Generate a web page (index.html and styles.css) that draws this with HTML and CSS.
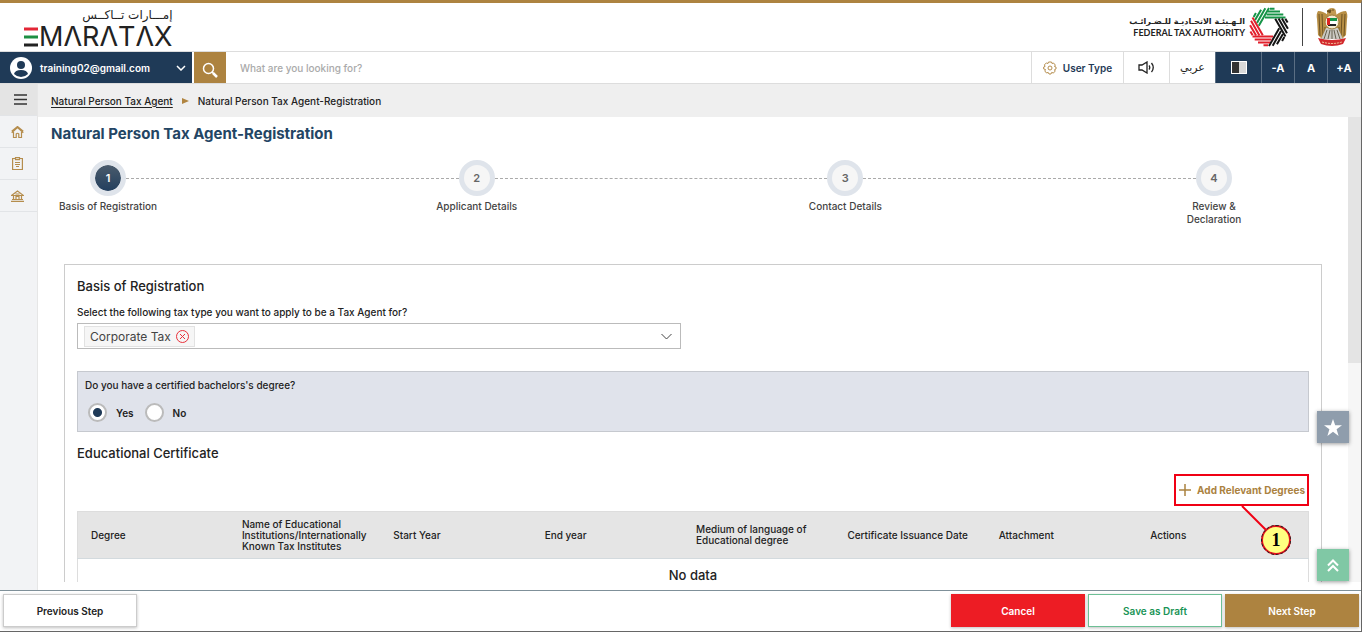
FILE: index.html
```
<!DOCTYPE html>
<html lang="en">
<head>
    <meta charset="UTF-8">
    <meta name="viewport" content="width=device-width, initial-scale=1.0">
    <title>Natural Person Tax Agent-Registration</title>
    <link rel="stylesheet" href="styles.css">
</head>
<body>
    <div class="app">
        <header class="header">
            <a class="brand" href="#" aria-label="EmaraTax">
                <span class="brand-ar" lang="ar" dir="rtl">إمـــارات تــاكــس</span>
                <span class="brand-en">
                    <svg width="14" height="20" viewBox="0 0 14 20">
                        <path d="M0 2h14" stroke="#e32636" stroke-width="3"/>
                        <path d="M0 10h14" stroke="#1d8f43" stroke-width="3"/>
                        <path d="M0 18h14" stroke="#222" stroke-width="3"/>
                    </svg>
                    <span>MΛRΛTΛX</span>
                </span>
            </a>
            <div class="authority">
                <div class="authority-name">
                    <span class="authority-ar" lang="ar" dir="rtl">الـهـيئـة الاتحـاديـة للـضـرائـب</span>
                    <span class="authority-en">FEDERAL TAX AUTHORITY</span>
                </div>
                <svg class="authority-logo" width="40" height="40" viewBox="-20 -20 40 40" fill="none" stroke-width="2">
                    <defs>
                        <path id="blade" d="M-4-9.500H16.500M-2.500-12.500H14.300M-1-15.500H11M1-18.300H5.500"/>
                    </defs>
                    <g stroke="#159447">
                        <use href="#blade" transform="rotate(-60)"/>
                        <use href="#blade"/>
                    </g>
                    <g stroke="#151515">
                        <use href="#blade" transform="rotate(60)"/>
                        <use href="#blade" transform="rotate(120)"/>
                    </g>
                    <g stroke="#e2202c">
                        <use href="#blade" transform="rotate(180)"/>
                        <use href="#blade" transform="rotate(240)"/>
                    </g>
                </svg>
                <span class="divider"></span>
                <svg class="emblem" width="32" height="40" viewBox="0 0 32 40">
                    <path d="M11 5q1-4 5-4 4 0 4 4l1 5H11z" fill="#c19a52"/>
                    <path d="M11 4l4-1-1 3zM16 3h2" fill="#6b5021" stroke="#6b5021"/>
                    <path d="M12 8Q7 4 2 4q-2 3-1 8l1 16 5 5 8-9zM20 8q5-4 10-4 2 3 1 8l-1 16-5 5-8-9z" fill="#b88f45"/>
                    <path d="M3 7l1 22M6 7l1 23M9 20v9M29 7l-1 22M26 7l-1 23M23 20v9" stroke="#6d5324" fill="none"/>
                    <path d="M10 21h12l5 11H5z" fill="#c9c8c2"/>
                    <path d="M11 23l-3 9M14 23l-2 9M16 23v9M18 23l2 9M21 23l3 9" stroke="#66614f" fill="none"/>
                    <circle cx="16" cy="15" r="7" fill="#f3ead0" stroke="#9b7a38"/>
                    <path d="M11 11h10v3H11z" fill="#159447"/>
                    <path d="M11 14h10v3H11z" fill="#fff"/>
                    <path d="M12 17h8v2h-8z" fill="#222"/>
                    <path d="M11 11h3v7h-3z" fill="#d22"/>
                    <path d="M2 31q14 4 28 0l-3 6q-11 4-22 0z" fill="#d22a2e"/>
                    <path d="M6 35q10 3 20 0" stroke="#f1c9a0" stroke-dasharray="2 1" fill="none"/>
                </svg>
            </div>
        </header>

        <div class="toolbar">
            <button class="user-menu" type="button">
                <svg width="22" height="22" viewBox="0 0 22 22">
                    <circle cx="11" cy="11" r="11" fill="#fff"/>
                    <circle cx="11" cy="8" r="4" fill="#1f3a57"/>
                    <path d="M4 17q1-4 7-4t7 4q-3 3-7 3t-7-3z" fill="#1f3a57"/>
                </svg>
                <span class="user-email">training02@gmail.com</span>
                <svg width="10" height="6" viewBox="0 0 10 6"><path d="M1 1l4 4 4-4" fill="none" stroke="#fff" stroke-width="1.500"/></svg>
            </button>
            <button class="search-btn" type="button" aria-label="Search">
                <svg width="16" height="16" viewBox="0 0 16 16" fill="none" stroke="#fff" stroke-width="1.500">
                    <circle cx="6.500" cy="6.500" r="5"/>
                    <path d="M10 10l2 2"/>
                    <path d="M11 11l4 4" stroke-width="2.500"/>
                </svg>
            </button>
            <input class="search-input" type="text" aria-label="Search" placeholder="What are you looking for?">
            <button class="tool user-type" type="button">
                <svg width="14" height="14" viewBox="0 0 14 14" fill="none" stroke="#b58d4d">
                    <path d="M5.500 1h3l.5 1.500 1.500-.5 1.800 2-.8 1.500 1.500.5v2l-1.500.7.7 1.600-2 1.700-1.500-.6-.7 1.600h-2l-.8-1.600-1.700.6-1.700-2 .7-1.500L.7 8V6l1.400-.6-.7-1.500 2-2 1.500.7z"/>
                    <circle cx="7" cy="7" r="2"/>
                </svg>
                User Type
            </button>
            <button class="tool sound" type="button" aria-label="Read aloud">
                <svg width="17" height="13" viewBox="0 0 17 13" fill="none" stroke="#222" stroke-width="1.300">
                    <path d="M1 4h3l5-3v11L4 9H1zM11 4.500q1.500 2 0 4M13.500 2q3.500 4.500 0 9"/>
                </svg>
            </button>
            <button class="tool lang" type="button" lang="ar">عربي</button>
            <button class="tool dark contrast" type="button" aria-label="Contrast">
                <svg width="16" height="13" viewBox="0 0 16 13">
                    <path d="M0 0h16v13H0z" fill="#d8d8d8"/>
                    <path d="M1 1h7v11H1z" fill="#333"/>
                    <path d="M.5.5h15v12H.5z" fill="none" stroke="#fff"/>
                </svg>
            </button>
            <button class="tool dark" type="button">-A</button>
            <button class="tool dark" type="button">A</button>
            <button class="tool dark" type="button">+A</button>
        </div>

        <div class="body">
            <nav class="sidebar">
                <button class="side-item menu" type="button" aria-label="Menu">
                    <svg width="13" height="11" viewBox="0 0 13 11"><path d="M0 1h13M0 5.500h13M0 10h13" stroke="#333" stroke-width="1.300"/></svg>
                </button>
                <a class="side-item" href="#" aria-label="Home">
                    <svg width="13" height="12" viewBox="0 0 13 12" fill="none" stroke="#b58d4d" stroke-width="1.200">
                        <path d="M.7 6.700L6.500 1.500l5.800 5.200M.7 5.200L6.500.5l5.800 4.700M2.500 6v5.500h2.700V8q1.300-1.500 2.600 0v3.500h2.700V6"/>
                    </svg>
                </a>
                <a class="side-item" href="#" aria-label="Applications">
                    <svg width="11" height="13" viewBox="0 0 11 13" fill="none" stroke="#b58d4d" stroke-width="1.200">
                        <path d="M3 1.500H.6v11h9.800v-11H8M3.500.6h4v2h-4zM3 5.500h5M3 7.500h5M4 9.500h3"/>
                    </svg>
                </a>
                <a class="side-item" href="#" aria-label="Authority">
                    <svg width="13" height="12" viewBox="0 0 13 12" fill="none" stroke="#b58d4d" stroke-width="1.200">
                        <path d="M.5 5.500l6-4.500 6 4.500zM4.500 4h4M2.500 5.500V9M5 9V6.500h3V9M10.500 5.500V9M1 9.500h11M0 11.400h13"/>
                    </svg>
                </a>
            </nav>

            <main class="main">
                <nav class="breadcrumb" aria-label="Breadcrumb">
                    <a href="#">Natural Person Tax Agent</a>
                    <svg width="7" height="6" viewBox="0 0 7 6"><path d="M0 0l7 3-7 3z" fill="#b08440"/></svg>
                    <span>Natural Person Tax Agent-Registration</span>
                </nav>

                <div class="viewport">
                    <div class="content">
                        <h1>Natural Person Tax Agent-Registration</h1>

                        <div class="stepper">
                            <div class="step active"><span class="step-no">1</span><span>Basis of Registration</span></div>
                            <span class="step-line"></span>
                            <div class="step"><span class="step-no">2</span><span>Applicant Details</span></div>
                            <span class="step-line"></span>
                            <div class="step"><span class="step-no">3</span><span>Contact Details</span></div>
                            <span class="step-line"></span>
                            <div class="step"><span class="step-no">4</span><span>Review &amp;<br>Declaration</span></div>
                        </div>

                        <section class="card">
                            <h2>Basis of Registration</h2>
                            <p class="label" id="tax-type-label">Select the following tax type you want to apply to be a Tax Agent for?</p>
                            <div class="multiselect" role="combobox" aria-expanded="false" aria-labelledby="tax-type-label" tabindex="0">
                                <span class="chip">
                                    Corporate Tax
                                    <button type="button" aria-label="Remove Corporate Tax">
                                        <svg width="13" height="13" viewBox="0 0 13 13" fill="none" stroke="#e8313b">
                                            <circle cx="6.500" cy="6.500" r="6"/>
                                            <path d="M4 4l5 5M9 4L4 9"/>
                                        </svg>
                                    </button>
                                </span>
                                <svg width="11" height="7" viewBox="0 0 11 7"><path d="M.5 1l5 5 5-5" fill="none" stroke="#444"/></svg>
                            </div>

                            <fieldset class="question">
                                <legend>Do you have a certified bachelors's degree?</legend>
                                <div class="options">
                                    <input type="radio" name="degree" id="degree-yes" checked>
                                    <label for="degree-yes">Yes</label>
                                    <input type="radio" name="degree" id="degree-no">
                                    <label for="degree-no">No</label>
                                </div>
                            </fieldset>

                            <h2>Educational Certificate</h2>
                            <div class="actions">
                                <div class="callout">
                                    <button class="add-btn" type="button">
                                        <svg width="12" height="12" viewBox="0 0 12 12"><path d="M6 0v12M0 6h12" stroke="#ab823f" stroke-width="1.500"/></svg>
                                        Add Relevant Degrees
                                    </button>
                                    <svg class="callout-line" width="34" height="34" viewBox="0 0 34 34"><path d="M1 0l30 30" stroke="#f00014" stroke-width="2"/></svg>
                                    <span class="callout-no">1</span>
                                </div>
                            </div>

                            <table class="degrees">
                                <thead>
                                    <tr>
                                        <th>Degree</th>
                                        <th>Name of Educational Institutions/Internationally Known Tax Institutes</th>
                                        <th>Start Year</th>
                                        <th>End year</th>
                                        <th>Medium of language of Educational degree</th>
                                        <th>Certificate Issuance Date</th>
                                        <th>Attachment</th>
                                        <th>Actions</th>
                                        <th class="gutter"></th>
                                    </tr>
                                </thead>
                                <tbody>
                                    <tr><td colspan="9">No data</td></tr>
                                </tbody>
                            </table>
                        </section>
                    </div>
                    <div class="scrollbar"><div class="thumb"></div></div>
                    <button class="float-btn favourite" type="button" aria-label="Favourites">
                        <svg width="18" height="17" viewBox="0 0 18 17"><path d="M9 0l2.200 6.200H18l-5.400 4L14.600 17 9 12.800 3.400 17l2-6.800L0 6.200h6.800z" fill="#fff"/></svg>
                    </button>
                    <button class="float-btn to-top" type="button" aria-label="Back to top">
                        <svg width="12" height="13" viewBox="0 0 12 13"><path d="M1 6.500l5-5 5 5M1 12l5-5 5 5" fill="none" stroke="#fff" stroke-width="2"/></svg>
                    </button>
                </div>
            </main>
        </div>

        <footer class="footer">
            <button class="btn previous" type="button">Previous Step</button>
            <button class="btn cancel" type="button">Cancel</button>
            <button class="btn draft" type="button">Save as Draft</button>
            <button class="btn next" type="button">Next Step</button>
        </footer>
    </div>
</body>
</html>
```
FILE: styles.css
```
* {
    box-sizing: border-box;
}

body {
    margin: 0;
    padding: 0 4px 5px 0;
    height: 100vh;
    background-color: #fff;
    color: #222;
    font-family: Inter, "Noto Sans", sans-serif;
    font-size: 10px;
    font-weight: 500;
}

button,
input {
    font: inherit;
    color: inherit;
}

button {
    margin: 0;
    padding: 0;
    border: none;
    background: none;
    cursor: pointer;
}

svg {
    display: block;
    flex: none;
}

.app {
    display: flex;
    flex-direction: column;
    height: 100%;
    border-top: 3px solid #ad8340;
    border-right: 1px solid #666;
    border-bottom: 1px solid #666;
}

/* Header */
.header {
    display: flex;
    justify-content: space-between;
    align-items: center;
    height: 48px;
    flex: none;
    padding: 0 13px 0 24px;
}

.brand {
    display: flex;
    flex-direction: column;
    color: #222;
    text-decoration: none;
}

.brand-ar {
    font-family: "DejaVu Sans", sans-serif;
    font-size: 12px;
    line-height: 20px;
}

.brand-en {
    display: flex;
    align-items: center;
    gap: 1px;
    font-size: 27px;
    font-weight: 400;
    line-height: 24px;
}

.authority {
    display: flex;
    align-items: center;
}

.authority-name {
    display: flex;
    flex-direction: column;
    align-items: flex-end;
    margin-right: 4px;
    line-height: 11px;
}

.authority-ar {
    font-family: "DejaVu Sans", sans-serif;
    font-size: 8px;
    font-weight: 700;
}

.authority-en {
    font-family: Lato, sans-serif;
    font-size: 9px;
    font-weight: 700;
}

.divider {
    width: 1px;
    height: 38px;
    margin: 0 13px;
    background-color: #444;
}

/* Toolbar */
.toolbar {
    display: flex;
    flex: none;
    height: 33px;
    padding-right: 1px;
    border-top: 1px solid #ddd;
    border-bottom: 1px solid #ddd;
}

.user-menu {
    display: flex;
    align-items: center;
    gap: 8px;
    width: 192px;
    margin-right: 2px;
    padding: 0 6px 0 10px;
    background-color: #1f3a57;
    color: #fff;
    font-weight: 600;
}

.user-email {
    flex: 1;
    text-align: left;
}

.search-btn {
    display: flex;
    align-items: center;
    justify-content: center;
    width: 32px;
    padding-top: 4px;
    background-color: #ad8340;
}

.search-input {
    flex: 1;
    min-width: 0;
    padding: 0 14px;
    border: none;
    outline: none;
}

.search-input::placeholder {
    color: #aaa;
}

.tool {
    display: flex;
    align-items: center;
    justify-content: center;
    gap: 6px;
    width: 33px;
    border-left: 1px solid #ddd;
}

.tool.user-type {
    width: 92px;
    color: #1f3a57;
    font-weight: 600;
}

.tool.sound,
.tool.lang,
.tool.contrast {
    width: 46px;
}

.tool.lang {
    font-family: "DejaVu Sans", sans-serif;
    font-size: 11px;
}

.tool.dark {
    background-color: #1f3a57;
    border-color: #5b6f84;
    color: #fff;
    font-size: 11px;
    font-weight: 700;
}

/* Page body */
.body {
    display: flex;
    flex: 1;
    min-height: 0;
}

.sidebar {
    width: 38px;
    flex: none;
    background-color: #f2f3f5;
    border-right: 1px solid #e6e6e6;
}

.side-item {
    display: flex;
    align-items: center;
    justify-content: center;
    width: 100%;
    height: 32px;
    padding-right: 2px;
    border-bottom: 1px solid #e2e4e7;
}

.side-item.menu {
    padding: 0 0 0 4px;
    background-color: #e4e4e4;
}

.main {
    display: flex;
    flex-direction: column;
    flex: 1;
    min-width: 0;
}

.breadcrumb {
    display: flex;
    align-items: center;
    gap: 9px;
    height: 33px;
    flex: none;
    padding-left: 13px;
    background-color: #efefef;
}

.breadcrumb a {
    color: inherit;
    text-underline-offset: 2px;
}

.viewport {
    position: relative;
    display: flex;
    flex: 1;
    min-height: 0;
    margin-bottom: 8px;
}

.content {
    flex: 1;
    min-width: 0;
    overflow: hidden;
    padding: 8px 26px 0 13px;
}

.scrollbar {
    width: 13px;
    background-color: #f6f6f6;
}

.thumb {
    height: 53%;
    background-color: #e4e4e4;
}

h1 {
    margin: 0;
    color: #234564;
    font-size: 15px;
    font-weight: 700;
    line-height: 18px;
}

h2 {
    margin: 0;
    font-size: 13px;
    font-weight: 500;
    line-height: 18px;
}

/* Steps */
.stepper {
    display: flex;
    height: 104px;
    margin: 17px 51px 0 0;
}

.step {
    display: flex;
    flex-direction: column;
    align-items: center;
    gap: 4px;
    width: 114px;
    flex: none;
    color: #444;
    line-height: 13px;
    text-align: center;
}

.step-no {
    display: flex;
    align-items: center;
    justify-content: center;
    width: 36px;
    height: 36px;
    border: 5px solid #dfe4eb;
    border-radius: 50%;
    background-color: #f6f6f6;
    color: #666;
    font-size: 11px;
    font-weight: 600;
}

.step.active .step-no {
    background: linear-gradient(#4a5b6c, #233f5e);
    background-clip: padding-box;
    color: #fff;
}

.step-line {
    flex: 1;
    height: 0;
    margin: 18px -39px 0;
    border-top: 1px dashed #aaa;
}

/* Form */
.card {
    margin-left: 13px;
    padding: 12px;
    border: 1px solid #ccc;
}

.label {
    margin: 11px 0 5px;
    line-height: 12px;
}

.multiselect {
    display: flex;
    align-items: center;
    justify-content: space-between;
    width: 49%;
    height: 26px;
    padding: 0 8px 0 6px;
    border: 1px solid #bbb;
}

.chip {
    display: flex;
    align-items: center;
    gap: 5px;
    height: 21px;
    padding: 0 5px;
    border: 1px solid #e2e2e2;
    background-color: #f6f6f6;
    color: #444;
    font-size: 12px;
    font-weight: 400;
}

.question {
    margin: 22px 0 12px;
    padding: 7px;
    border: 1px solid #c6c9cf;
    background-color: #e0e3eb;
}

.question legend {
    float: left;
    width: 100%;
    padding: 0;
    line-height: 13px;
}

.options {
    display: flex;
    align-items: center;
    clear: both;
    padding: 11px 0 2px 3px;
}

.options input {
    appearance: none;
    width: 19px;
    height: 19px;
    margin: 0 9px 0 0;
    border: 2px solid #bbb;
    border-radius: 50%;
    background-color: #fff;
}

.options input:checked {
    background-image: radial-gradient(circle, #1f3a57 4px, transparent 5px);
}

.options label {
    margin-right: 11px;
    font-weight: 600;
}

/* Degrees table */
.actions {
    display: flex;
    justify-content: flex-end;
    margin: 12px 0 5px;
}

.callout {
    position: relative;
    border: 2px solid #f00014;
}

.add-btn {
    display: flex;
    align-items: center;
    gap: 6px;
    height: 28px;
    padding: 0 2px 0 3px;
    color: #ab823f;
    font-weight: 700;
}

.callout-line {
    position: absolute;
    top: 30px;
    left: 65px;
    z-index: 1;
}

.callout-no {
    position: absolute;
    top: 49px;
    left: 85px;
    z-index: 2;
    width: 30px;
    height: 30px;
    border: 2px solid #e0101c;
    border-radius: 50%;
    outline: 1px dashed #222;
    outline-offset: -1px;
    background-color: #ffff80;
    color: #000;
    font: 700 18px/26px "Liberation Serif", serif;
    text-align: center;
}

.degrees {
    width: 100%;
    border: 1px solid #ddd;
    border-collapse: collapse;
    table-layout: fixed;
}

.degrees th {
    height: 47px;
    padding: 0 10px 0 13px;
    background-color: #e5e5e5;
    border-bottom: 1px solid #d3dade;
    font-weight: 500;
    line-height: 11px;
    text-align: left;
}

.degrees th.gutter {
    width: 20px;
    padding: 0;
}

.degrees td {
    height: 33px;
    padding: 0;
    font-size: 13px;
    text-align: center;
}

.float-btn {
    position: absolute;
    right: 12px;
    display: flex;
    align-items: center;
    justify-content: center;
    width: 32px;
    height: 32px;
    box-shadow: 0 1px 4px rgba(0, 0, 0, 0.4);
}

.favourite {
    bottom: 139px;
    background-color: #8f9dac;
}

.to-top {
    bottom: 1px;
    background-color: #80c8a5;
}

/* Footer */
.footer {
    display: flex;
    flex: none;
    gap: 3px;
    padding: 3px 2px 4px 3px;
    border-top: 1px solid #7f9099;
}

.btn {
    width: 134px;
    height: 33px;
    border: 1px solid #ccc;
    box-shadow: 0 1px 3px rgba(0, 0, 0, 0.25);
    font-weight: 600;
}

.previous {
    margin-right: auto;
}

.cancel {
    border-color: #ed1c24;
    background-color: #ed1c24;
    color: #fff;
}

.draft {
    border-color: #6dbf95;
    color: #1a9457;
}

.next {
    border-color: #ad8340;
    background-color: #ad8340;
    color: #fff;
}
```
